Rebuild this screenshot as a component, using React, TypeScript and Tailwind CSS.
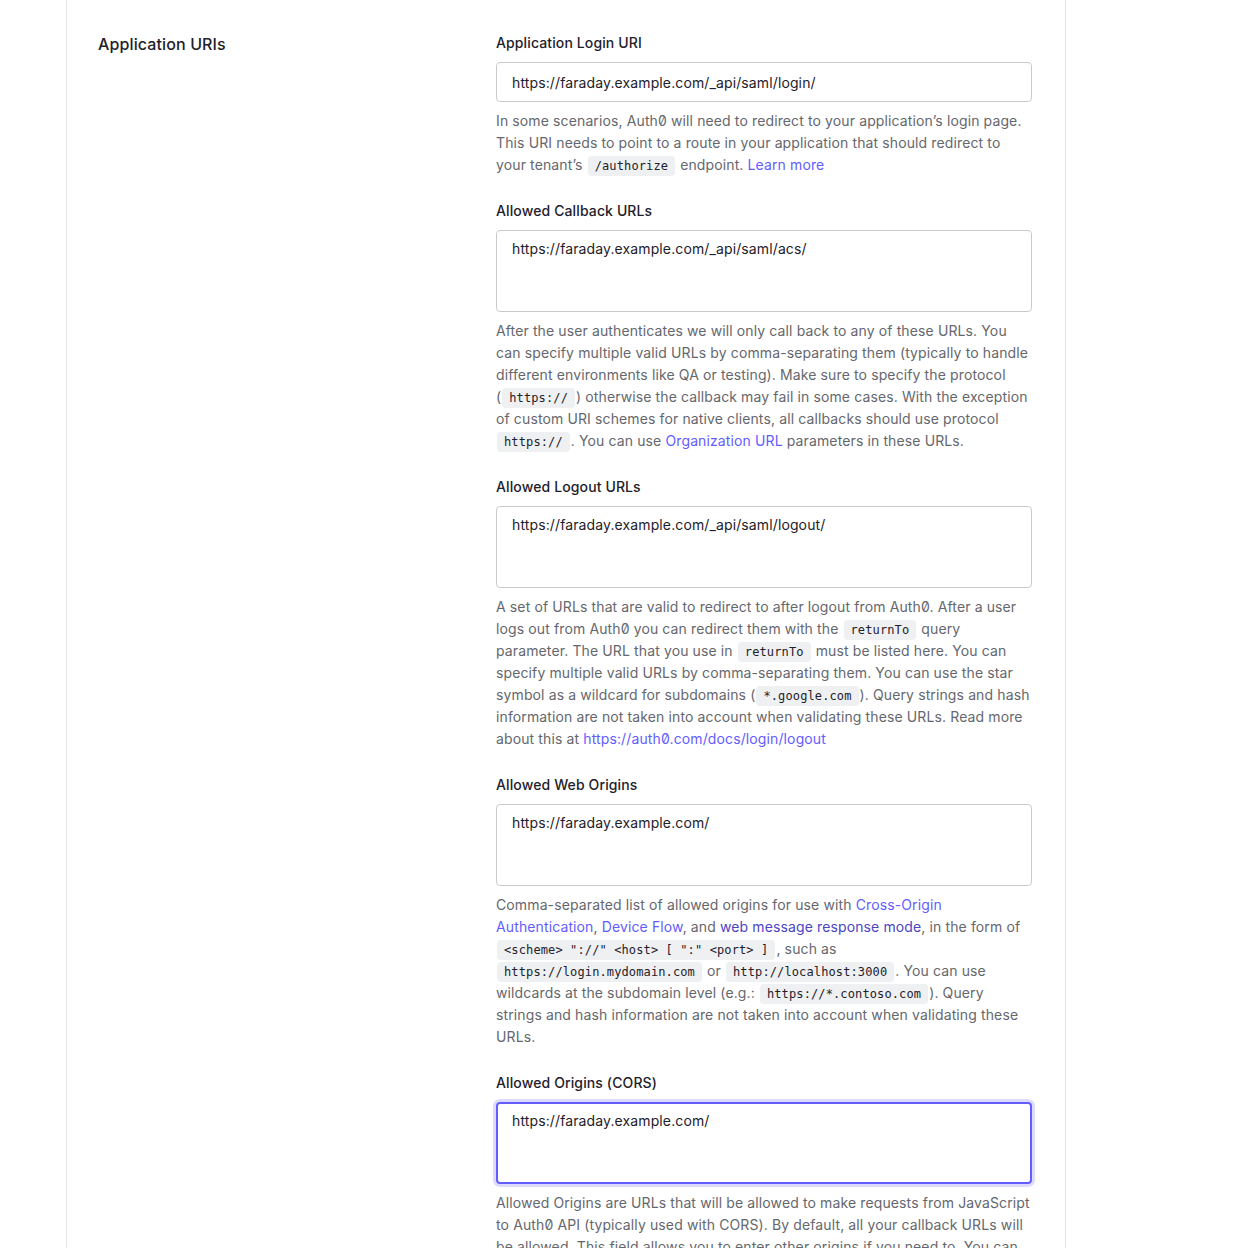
import type { ReactNode } from "react";

const font = { fontFamily: "Inter, 'Noto Sans', sans-serif" };

function Code({ children }: { children: ReactNode }) {
  return (
    <code className="mx-px rounded-[4px] bg-[#eff0f2] px-[7px] py-[3px] font-['DejaVu_Sans_Mono',monospace] text-[12px] leading-[14px] text-[#1e212a]">
      {children}
    </code>
  );
}

function A({ children, dark }: { children: ReactNode; dark?: boolean }) {
  return (
    <a href="#" className={dark ? "text-[#4b45c6]" : "text-[#635dff]"}>
      {children}
    </a>
  );
}

function Field({
  label,
  value,
  multi,
  focused,
  children,
}: {
  label: string;
  value: string;
  multi?: boolean;
  focused?: boolean;
  children: ReactNode;
}) {
  return (
    <div className="flex flex-col">
      <label className="mb-[9px] text-[14px] leading-5 font-medium text-[#1e212a]">{label}</label>
      {multi ? (
        <textarea
          readOnly
          defaultValue={value}
          className={
            focused
              ? "h-[82px] resize-none rounded-[4px] border-2 border-[#635dff] px-[14px] py-[7px] text-[14px] leading-5 tracking-[0.12px] text-[#1e212a] shadow-[0_0_0_3px_#dcdbff] outline-none"
              : "h-[82px] resize-none rounded-[4px] border border-[#c9cace] px-[15px] py-2 text-[14px] leading-5 tracking-[0.12px] text-[#1e212a] outline-none"
          }
          style={font}
        />
      ) : (
        <input
          readOnly
          defaultValue={value}
          className="h-[40px] rounded-[4px] border border-[#c9cace] px-[15px] text-[14px] tracking-[0.12px] text-[#1e212a] outline-none"
          style={font}
        />
      )}
      <p className="mt-2 text-[14px] leading-[22px] text-[#65676e]">{children}</p>
    </div>
  );
}

export default function App() {
  return (
    <div className="min-h-[1248px] bg-white tracking-[0.12px] slashed-zero" style={font}>
      <div className="ml-[66px] min-h-[1248px] w-[1000px] border-x border-[#e3e4e6] px-8 pt-[33px]">
        <div className="flex">
          {/* Section title */}
          <div className="w-[397px] shrink-0">
            <h2 className="-ml-px pt-px text-[16px] leading-5 font-medium text-[#1e212a]">Application URIs</h2>
          </div>

          {/* Fields */}
          <div className="flex w-[536px] flex-col gap-[25px]">
            <Field label="Application Login URI" value="https://faraday.example.com/_api/saml/login/">
              In some scenarios, Auth0 will need to redirect to your application’s login page. This URI needs to
              point to a route in your application that should redirect to your tenant’s <Code>/authorize</Code>{" "}
              endpoint. <A>Learn more</A>
            </Field>

            <Field label="Allowed Callback URLs" value="https://faraday.example.com/_api/saml/acs/" multi>
              After the user authenticates we will only call back to any of these URLs. You can specify multiple
              valid URLs by comma-separating them (typically to handle different environments like QA or testing).
              Make sure to specify the protocol (<Code>https://</Code>) otherwise the callback may fail in some
              cases. With the exception of custom URI schemes for native clients, all callbacks should use protocol{" "}
              <Code>https://</Code>. You can use <A>Organization URL</A> parameters in these URLs.
            </Field>

            <Field label="Allowed Logout URLs" value="https://faraday.example.com/_api/saml/logout/" multi>
              A set of URLs that are valid to redirect to after logout from Auth0. After a user logs out from Auth0
              you can redirect them with the <Code>returnTo</Code> query parameter. The URL that you use in{" "}
              <Code>returnTo</Code> must be listed here. You can specify multiple valid URLs by comma-separating
              them. You can use the star symbol as a wildcard for subdomains (<Code>*.google.com</Code>). Query
              strings and hash information are not taken into account when validating these URLs. Read more about
              this at <A>https://auth0.com/docs/login/logout</A>
            </Field>

            <Field label="Allowed Web Origins" value="https://faraday.example.com/" multi>
              Comma-separated list of allowed origins for use with <A>Cross-Origin Authentication</A>,{" "}
              <A>Device Flow</A>, and <A dark>web message response mode</A>, in the form of{" "}
              <Code>{'<scheme> "://" <host> [ ":" <port> ]'}</Code>, such as <Code>https://login.mydomain.com</Code>{" "}
              or <Code>http://localhost:3000</Code>. You can use wildcards at the subdomain level (e.g.:{" "}
              <Code>https://*.contoso.com</Code>). Query strings and hash information are not taken into account
              when validating these URLs.
            </Field>

            <Field label="Allowed Origins (CORS)" value="https://faraday.example.com/" multi focused>
              Allowed Origins are URLs that will be allowed to make requests from JavaScript to Auth0 API (typically
              used with CORS). By default, all your callback URLs will be allowed. This field allows you to enter
              other origins if you need to. You can also use wildcards at the subdomain level (e.g.:{" "}
              <Code>https://*.contoso.com</Code>). Query strings and hash information are not taken into account
              when validating these URLs.
            </Field>
          </div>
        </div>
      </div>
    </div>
  );
}
